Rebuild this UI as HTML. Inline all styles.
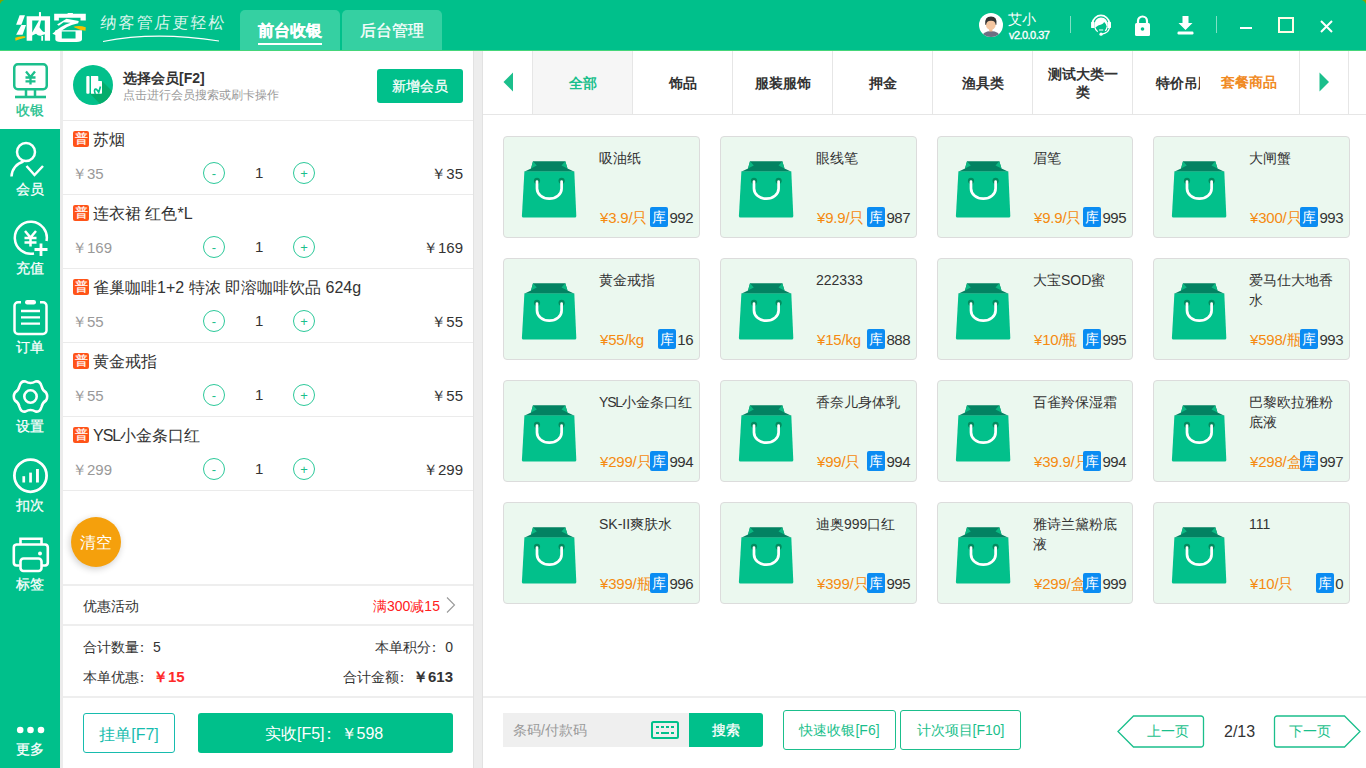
<!DOCTYPE html>
<html><head><meta charset="utf-8">
<style>
*{box-sizing:border-box;margin:0;padding:0}
html,body{width:1366px;height:768px;overflow:hidden;background:#fff;font-family:"Liberation Sans",sans-serif;color:#333}
.a{position:absolute;white-space:nowrap}
#hdr{position:absolute;left:0;top:0;width:1366px;height:50px;background:#00c08b}
#hline{position:absolute;left:0;top:50px;width:1366px;height:1px;background:#45d67a}
.tab{position:absolute;top:10px;width:100px;height:40px;background:#35d0a2;border-radius:5px 5px 0 0;color:#fff;font-size:16px;text-align:center;line-height:42px;-webkit-text-stroke:0.3px #fff}
#side{position:absolute;left:0;top:51px;width:60px;height:717px;background:#00c08b}
.si{position:absolute;left:0;width:60px;height:79px}
.si svg{position:absolute;left:0;top:0}
.si .t{position:absolute;left:0;width:60px;text-align:center;top:50px;font-size:14px;line-height:18px;color:#fff;-webkit-text-stroke:0.25px currentColor}
#gap1{position:absolute;left:60px;top:51px;width:3px;height:717px;background:#ececec}
#gap2{position:absolute;left:473px;top:51px;width:10px;height:717px;background:#ededed;border-left:1px solid #e2e2e2;border-right:1px solid #e2e2e2}
.hl{position:absolute;height:1px;background:#ebebeb}
.badge{position:absolute;width:16px;height:16px;background:#ff5419;border-radius:2px;color:#fff;font-size:13px;line-height:16px;text-align:center;-webkit-text-stroke:0.2px #fff}
.circ{position:absolute;width:22px;height:22px;border:1px solid #2cc99a;border-radius:50%;color:#1bbf8c;font-size:13px;line-height:22px;text-align:center}
.ctab{position:absolute;top:51px;width:100px;height:63px;border-left:1px solid #e6e6e6;font-size:14px;font-weight:bold;color:#333;text-align:center;display:flex;align-items:center;justify-content:center;line-height:18px}
.card{position:absolute;width:197px;height:102px;background:#ebf8ef;border:1px solid #dcdcdc;border-radius:4px}
.card svg{position:absolute;left:17px;top:23px}
.card .nm{position:absolute;left:95px;top:11px;width:97px;font-size:14px;line-height:20px;color:#333;white-space:normal;word-break:break-all}
.card .pr{position:absolute;left:96px;top:71px;font-size:15px;line-height:20px;color:#f58a10;white-space:nowrap;letter-spacing:-0.2px}
.card .stk{position:absolute;right:6px;top:71px;height:20px;font-size:15px;line-height:20px;color:#333;white-space:nowrap;letter-spacing:-0.5px}
.card .stk b{position:absolute;left:-19px;top:-1px;width:18px;height:20px;background:#0b8cf2;color:#fff;font-weight:normal;font-size:14px;line-height:20px;text-align:center;border-radius:2px;letter-spacing:0}
.cl{position:relative;left:-4px}
.obtn{position:absolute;border:1px solid #1bbf8c;border-radius:3px;color:#1bbf8c;font-size:14px;text-align:center}
</style></head><body>
<div id="hdr"></div>
<div id="hline"></div>
<svg class="a" style="left:0;top:0" width="5" height="5"><path d="M0 0 H4 Q1 1 0 4Z" fill="#7fa400"></path></svg>
<svg class="a" style="left:1361px;top:0" width="5" height="5"><path d="M5 0 H1 Q4 1 5 4Z" fill="#7fa400"></path></svg>

<!-- logo -->
<svg class="a" style="left:12px;top:8px" width="80" height="38" viewBox="0 0 1366 649">
<g fill="#fff">
<path d="M130 125 H222 L160 285 H70Z"></path>
<path d="M160 290 H240 L180 455 H70Z"></path>
<path d="M250 140 H650 V560 H560 V450 Q520 470 470 455 L530 480 V560 H500 V480 Q430 470 410 440 L345 470 V560 H250Z M345 215 V420 L460 215Z M495 215 L470 330 Q520 420 560 410 V215Z"></path>
<path d="M460 70 H495 V215 H460Z"></path>
<path d="M720 100 H950 V85 H1040 V100 H1260 V215 H1170 V165 H800 V215 H720Z"></path>
<path d="M770 280 L930 185 L1140 220 L1130 260 Q900 300 760 470 L690 440 Q830 300 1000 250 L880 245 L800 305Z"></path>
<path d="M740 380 H1195 V540 Q1195 580 1100 580 H830 Q740 580 740 540Z M850 400 V520 H1085 V400Z" fill-rule="evenodd"></path>
</g>
<path d="M55 510 Q140 470 230 485 L225 510 Q140 525 60 560Z" fill="#f8c000"></path>
<path d="M1050 320 Q1150 290 1260 330 L1255 390 Q1150 380 1070 335Z" fill="#f8c000"></path>
</svg>
<div class="a" style="left:101px;top:13px;font-size:16px;color:#fff;opacity:.85;line-height:20px;letter-spacing:2px;transform:skewX(-6deg)">纳客管店更轻松</div>
<svg class="a" style="left:100px;top:30px" width="130" height="14"><path d="M3 11.5 Q 55 1 119 11" stroke="#fff" stroke-width="1.2" fill="none"></path></svg>

<div class="tab" style="left:240px;font-weight:bold">前台收银</div>
<div class="a" style="left:258px;top:43px;width:64px;height:2px;background:#fff"></div>
<div class="tab" style="left:342px">后台管理</div>

<!-- user -->
<svg class="a" style="left:979px;top:13px" width="24" height="24" viewBox="0 0 24 24">
<circle cx="12" cy="12" r="12" fill="#fff"></circle>
<clipPath id="cc"><circle cx="12" cy="12" r="12"></circle></clipPath>
<g clip-path="url(#cc)"><path d="M2.5 25 Q3 18.3 12 18 Q21 18.3 21.5 25Z" fill="#6f6e82"/><rect x="10.2" y="15" width="3.2" height="3.5" fill="#efb88e"/><ellipse cx="11.8" cy="11.6" rx="4.9" ry="5.3" fill="#f5c6a0"/><path d="M6.2 11.8 Q5.3 3.6 12 3.6 Q18.6 3.6 17.4 11.8 L16.6 11.8 Q16.3 7.6 12 7.8 Q7.6 7.6 7.1 11.8Z" fill="#333"/></g>
</svg>
<div class="a" style="left:1008px;top:10px;font-size:14px;color:#fff;line-height:18px">艾小</div>
<div class="a" style="left:1009px;top:29px;font-size:11px;color:#fff;line-height:13px;letter-spacing:-0.55px;-webkit-text-stroke:0.35px #fff">v2.0.0.37</div>
<div class="a" style="left:1070px;top:16px;width:1px;height:17px;background:rgba(255,255,255,.5)"></div>
<svg class="a" style="left:1086px;top:10px" width="30" height="30" viewBox="0 0 768 768" fill="#fff" stroke="#fff">
<path d="M165 330 A220 225 0 0 1 600 330" fill="none" stroke-width="42"></path>
<rect x="130" y="300" width="88" height="162" rx="22" stroke="none"></rect>
<rect x="548" y="300" width="92" height="162" rx="22" stroke="none"></rect>
<path d="M215 430 Q210 200 380 195 Q560 195 558 420 L530 430 Q515 340 465 305 Q445 350 390 368 Q300 385 250 440Z" stroke="none"></path>
<path d="M225 430 Q240 520 300 555 M540 430 Q530 500 490 535" fill="none" stroke-width="32"></path>
<path d="M335 512 H440" stroke-width="26"></path>
<path d="M600 460 Q570 600 400 618" fill="none" stroke-width="32"></path>
<circle cx="385" cy="618" r="42" stroke="none"></circle>
</svg>
<svg class="a" style="left:1134px;top:15px" width="17" height="21" viewBox="0 0 17 21">
<path d="M4 9 V6 A4.5 4.5 0 0 1 13 6 V9" stroke="#fff" stroke-width="2.2" fill="none"></path><rect x="1" y="8" width="15" height="13" rx="1.5" fill="#fff"></rect><circle cx="8.5" cy="14" r="1.8" fill="#00c08b"></circle>
</svg>
<svg class="a" style="left:1177px;top:15px" width="17" height="20" viewBox="0 0 17 20">
<path d="M5.5 1 H11.5 V8 H15.5 L8.5 15 L1.5 8 H5.5Z" fill="#fff"></path><rect x="0.5" y="16.5" width="16" height="3" rx="1.2" fill="#fff"></rect>
</svg>
<div class="a" style="left:1216px;top:16px;width:1px;height:17px;background:rgba(255,255,255,.5)"></div>
<div class="a" style="left:1240px;top:27px;width:12px;height:2px;background:#fff"></div>
<div class="a" style="left:1278px;top:17px;width:16px;height:16px;border:2px solid #fdfde6"></div>
<svg class="a" style="left:1320px;top:20px" width="13" height="13" viewBox="0 0 13 13"><path d="M1 1 L12 12 M12 1 L1 12" stroke="#fff" stroke-width="2"></path></svg>

<!-- sidebar -->
<div id="side"></div>
<div class="si" style="top:51px;height:78px;background:#fff">
<svg width="60" height="79" viewBox="0 0 60 79" fill="none" stroke="#1bbf8c" stroke-width="2.5">
<rect x="14.25" y="13.25" width="32.5" height="25" rx="3.5"></rect>
<path d="M26 20.5 L30.5 26 L35 20.5 M30.5 26 V33.5 M25.5 26.5 H35.5 M25.5 30.3 H35.5" stroke-width="2.3"></path>
<path d="M26 39 V45 M35 39 V45"></path>
<path d="M15 46 H46" stroke-width="2.6"></path>
</svg>
<div class="t" style="color:#1bbf8c">收银</div>
</div>
<div class="si" style="top:130px">
<svg width="60" height="79" viewBox="0 0 60 79" fill="none" stroke="#fff" stroke-width="2.5">
<circle cx="26" cy="22" r="9"></circle>
<path d="M11.5 46.5 A16 16 0 0 1 23.5 31.5"></path>
<path d="M26.5 36 L34.5 45 L43 36"></path>
</svg>
<div class="t">会员</div>
</div>
<div class="si" style="top:209px">
<svg width="60" height="79" viewBox="0 0 60 79" fill="none" stroke="#fff" stroke-width="2.5">
<path d="M46.5 32 A16 16 0 1 0 34 44.5"></path>
<path d="M41 34.5 V47 M34.5 40.5 H47.5" stroke-width="2.8"></path>
<path d="M25 22 L30.5 28.5 L36 22 M30.5 28.5 V37.5 M24.5 29 H36.5 M24.5 33.5 H36.5" stroke-width="2.5"></path>
</svg>
<div class="t">充值</div>
</div>
<div class="si" style="top:288px">
<svg width="60" height="79" viewBox="0 0 60 79" fill="none" stroke="#fff" stroke-width="2.5">
<path d="M21 14.3 H18 A3.5 3.5 0 0 0 14.5 17.8 V42.5 A3.5 3.5 0 0 0 18 46 H43 A3.5 3.5 0 0 0 46.5 42.5 V17.8 A3.5 3.5 0 0 0 43 14.3 H40"></path>
<rect x="25" y="12" width="11" height="4.5" rx="2.2" fill="#fff" stroke="none"></rect>
<path d="M21 23 H40 M21 29.4 H40 M21 35.6 H40" stroke-width="2.4"></path>
</svg>
<div class="t">订单</div>
</div>
<div class="si" style="top:367px">
<svg width="60" height="79" viewBox="0 0 60 79" fill="none" stroke="#fff" stroke-width="2.6">
<path id="gear" d="M25.5 14.5 Q30.5 17.5 35.5 14.5 Q40 13.5 41.5 19 Q42.5 23.5 46 25.5 Q48.5 29.5 46 33.5 Q42.5 35.5 41.5 40 Q40 45.5 35.5 44.5 Q30.5 41.5 25.5 44.5 Q21 45.5 19.5 40 Q18.5 35.5 15 33.5 Q12.5 29.5 15 25.5 Q18.5 23.5 19.5 19 Q21 13.5 25.5 14.5Z"></path>
<circle cx="30.5" cy="29.5" r="6.2"></circle>
</svg>
<div class="t">设置</div>
</div>
<div class="si" style="top:446px">
<svg width="60" height="79" viewBox="0 0 60 79" fill="none" stroke="#fff" stroke-width="2.8">
<circle cx="30.5" cy="29.7" r="16.1"></circle>
<rect x="22.4" y="30.2" width="2.7" height="6.3" fill="#fff" stroke="none"></rect>
<rect x="29.2" y="26.6" width="2.7" height="9.9" fill="#fff" stroke="none"></rect>
<rect x="36" y="23" width="2.9" height="13.5" fill="#fff" stroke="none"></rect>
</svg>
<div class="t">扣次</div>
</div>
<div class="si" style="top:525px">
<svg width="60" height="79" viewBox="0 0 60 79" fill="none" stroke="#fff" stroke-width="2.6">
<path d="M20.5 19.5 V13.8 H41.5 V19.5"></path>
<path d="M19.5 40.5 H16.5 A3 3 0 0 1 13.8 37.5 V22.5 A3 3 0 0 1 16.5 19.5 H45 A3 3 0 0 1 47.8 22.5 V37.5 A3 3 0 0 1 45 40.5 H42"></path>
<rect x="20.5" y="33.5" width="21" height="12.5" rx="3"></rect>
<circle cx="40" cy="28.6" r="2" fill="#fff" stroke="none"></circle>
</svg>
<div class="t">标签</div>
</div>
<div class="si" style="top:689px">
<svg width="60" height="79" viewBox="0 0 60 79" fill="#fff">
<circle cx="20.2" cy="41" r="3.3"></circle><circle cx="30.5" cy="41" r="3.3"></circle><circle cx="41" cy="41" r="3.3"></circle>
</svg>
<div class="t" style="top:50.5px">更多</div>
</div>
<div id="gap1"></div>
<div id="gap2"></div>

<!-- left panel -->
<svg class="a" style="left:73px;top:65px" width="40" height="40" viewBox="0 0 40 40">
<defs><clipPath id="mc"><circle cx="20" cy="20" r="20"></circle></clipPath></defs>
<circle cx="20" cy="20" r="20" fill="#02c08b"></circle>
<g clip-path="url(#mc)"><path d="M29 16 L49 36 L37 48.8 L17 28.8Z" fill="#04ad6c"></path></g>
<rect x="13.3" y="11" width="3.2" height="17.8" rx="1" fill="#fff"></rect>
<path d="M18 11 H24.5 A0.8 0.8 0 0 1 25.3 11.8 V16 H28.2 A0.8 0.8 0 0 1 29 16.8 V28 A0.8 0.8 0 0 1 28.2 28.8 H18Z" fill="#fff"></path>
<path d="M22.3 29 C20.3 25 22.3 22.3 24.3 25.3 L25.7 27.3 L27.5 21.5" stroke="#02c08b" stroke-width="1.7" fill="none"></path>
</svg>
<div class="a" style="left:123px;top:69px;font-size:14px;font-weight:bold;line-height:18px;color:#333">选择会员[F2]</div>
<div class="a" style="left:123px;top:87px;font-size:12px;line-height:16px;color:#999">点击进行会员搜索或刷卡操作</div>
<div class="a" style="left:377px;top:69px;width:86px;height:34px;background:#00c08b;border-radius:3px;color:#fff;font-size:14px;line-height:34px;text-align:center;-webkit-text-stroke:0.25px #fff">新增会员</div>
<div class="hl" style="left:63px;top:120px;width:410px"></div>

<div class="badge" style="left:73px;top:131px">普</div><div class="a" style="left:93px;top:129px;font-size:16px;line-height:22px;color:#333">苏烟</div><div class="a" style="left:72px;top:164px;font-size:15px;line-height:20px;color:#999">￥35</div><div class="circ" style="left:203px;top:162px">-</div><div class="a" style="left:255px;top:163px;font-size:15px;line-height:20px;color:#333">1</div><div class="circ" style="left:293px;top:162px">+</div><div class="a" style="right:903px;top:164px;font-size:15px;line-height:20px;color:#333">￥35</div><div class="hl" style="left:63px;top:194px;width:410px"></div><div class="badge" style="left:73px;top:205px">普</div><div class="a" style="left:93px;top:203px;font-size:16px;line-height:22px;color:#333">连衣裙 红色*L</div><div class="a" style="left:72px;top:238px;font-size:15px;line-height:20px;color:#999">￥169</div><div class="circ" style="left:203px;top:236px">-</div><div class="a" style="left:255px;top:237px;font-size:15px;line-height:20px;color:#333">1</div><div class="circ" style="left:293px;top:236px">+</div><div class="a" style="right:903px;top:238px;font-size:15px;line-height:20px;color:#333">￥169</div><div class="hl" style="left:63px;top:268px;width:410px"></div><div class="badge" style="left:73px;top:279px">普</div><div class="a" style="left:93px;top:277px;font-size:16px;line-height:22px;color:#333">雀巢咖啡1+2 特浓 即溶咖啡饮品 624g</div><div class="a" style="left:72px;top:312px;font-size:15px;line-height:20px;color:#999">￥55</div><div class="circ" style="left:203px;top:310px">-</div><div class="a" style="left:255px;top:311px;font-size:15px;line-height:20px;color:#333">1</div><div class="circ" style="left:293px;top:310px">+</div><div class="a" style="right:903px;top:312px;font-size:15px;line-height:20px;color:#333">￥55</div><div class="hl" style="left:63px;top:342px;width:410px"></div><div class="badge" style="left:73px;top:353px">普</div><div class="a" style="left:93px;top:351px;font-size:16px;line-height:22px;color:#333">黄金戒指</div><div class="a" style="left:72px;top:386px;font-size:15px;line-height:20px;color:#999">￥55</div><div class="circ" style="left:203px;top:384px">-</div><div class="a" style="left:255px;top:385px;font-size:15px;line-height:20px;color:#333">1</div><div class="circ" style="left:293px;top:384px">+</div><div class="a" style="right:903px;top:386px;font-size:15px;line-height:20px;color:#333">￥55</div><div class="hl" style="left:63px;top:416px;width:410px"></div><div class="badge" style="left:73px;top:427px">普</div><div class="a" style="left:93px;top:425px;font-size:16px;line-height:22px;color:#333"><span style="letter-spacing:-1px">YSL</span>小金条口红</div><div class="a" style="left:72px;top:460px;font-size:15px;line-height:20px;color:#999">￥299</div><div class="circ" style="left:203px;top:458px">-</div><div class="a" style="left:255px;top:459px;font-size:15px;line-height:20px;color:#333">1</div><div class="circ" style="left:293px;top:458px">+</div><div class="a" style="right:903px;top:460px;font-size:15px;line-height:20px;color:#333">￥299</div><div class="hl" style="left:63px;top:490px;width:410px"></div>

<!-- clear -->
<div class="a" style="left:71px;top:517px;width:50px;height:50px;border-radius:50%;background:#f5a00c;box-shadow:-1px 2px 7px rgba(0,0,0,.2);color:#fff;font-size:16px;line-height:52px;text-align:center">清空</div>
<div class="a" style="left:63px;top:584px;width:410px;height:2px;background:#eeeeee"></div>
<div class="a" style="left:83px;top:597px;font-size:14px;line-height:18px;color:#333">优惠活动</div>
<div class="a" style="left:373px;top:597px;font-size:14px;line-height:18px;color:#ff2020">满300减15</div>
<svg class="a" style="left:445px;top:596px" width="12" height="18" viewBox="0 0 12 18"><path d="M2 1.5 L9.5 9 L2 16.5" stroke="#999" stroke-width="1.1" fill="none"></path></svg>
<div class="a" style="left:63px;top:624px;width:410px;height:2px;background:#eeeeee"></div>
<div class="a" style="left:83px;top:638px;font-size:14px;line-height:18px;color:#333">合计数量<span class="cl">：</span>5</div>
<div class="a" style="right:913px;top:638px;font-size:14px;line-height:18px;color:#333">本单积分<span class="cl">：</span>0</div>
<div class="a" style="left:83px;top:668px;font-size:14px;line-height:18px;color:#333">本单优惠<span class="cl">：</span><span style="color:#ff2a2a;font-weight:bold;font-size:15px">￥15</span></div>
<div class="a" style="right:913px;top:668px;font-size:14px;line-height:18px;color:#333">合计金额<span class="cl">：</span><span style="font-weight:bold;font-size:15px">￥613</span></div>
<div class="a" style="left:63px;top:696px;width:410px;height:2px;background:#eeeeee"></div>
<div class="a" style="left:83px;top:713px;width:92px;height:40px;border:1px solid #17bcae;border-radius:3px;color:#17bcae;font-size:16px;line-height:41px;text-align:center">挂单[F7]</div>
<div class="a" style="left:198px;top:713px;width:255px;height:40px;background:#00c08b;border-radius:3px;color:#fff;font-size:16px;line-height:42px;padding-left:67px">实收[F5]<span class="cl">：</span>￥598</div>

<!-- right panel -->
<div class="a" style="left:483px;top:114px;width:883px;height:1px;background:#e6e6e6"></div>
<svg class="a" style="left:503px;top:72px" width="11" height="20" viewBox="0 0 11 20"><path d="M10 0.5 V19.5 L0.5 10Z" fill="#1bbf8c"></path></svg>
<div class="ctab" style="left:532px;background:#f6f6f6;color:#1bbf8c">全部</div>
<div class="ctab" style="left:632px">饰品</div>
<div class="ctab" style="left:732px">服装服饰</div>
<div class="ctab" style="left:832px">押金</div>
<div class="ctab" style="left:932px">渔具类</div>
<div class="ctab" style="left:1032px;padding:0 14px">测试大类一类</div>
<div class="ctab" style="left:1132px;width:68px;justify-content:flex-start;padding-left:23px;overflow:hidden;white-space:nowrap;border-left:1px solid #e6e6e6">特价吊牌</div>
<div class="a" style="left:1221px;top:73px;font-size:14px;font-weight:bold;line-height:18px;color:#f08a24">套餐商品</div>
<div class="a" style="left:1299px;top:51px;width:1px;height:63px;background:#e6e6e6"></div>
<svg class="a" style="left:1319px;top:72px" width="11" height="20" viewBox="0 0 11 20"><path d="M0.5 0.5 V19.5 L10 10Z" fill="#1bbf8c"></path></svg>
<div class="a" style="left:1348px;top:51px;width:1px;height:63px;background:#e6e6e6"></div>

<div class="card" style="left:503px;top:136px;width:197px"><svg width="58" height="60" viewBox="0 0 58 60"><path d="M12 1.2 H44.3 L46.5 8.5 L53.5 11.8 H3.2 L10 8.5Z" fill="#038262"></path><path d="M12 1.2 L15.8 5.6 L10 8.6Z M44.3 1.2 L40.5 5.6 L46.5 8.6Z" fill="#0bb882"></path><path d="M3.4 11.5 H53.3 L55.3 56 Q55.3 57.5 53.8 57.5 H2.4 Q0.9 57.5 0.9 56Z" fill="#02c08b"></path><circle cx="16" cy="20.8" r="3.1" fill="#038a5f"></circle><circle cx="40.6" cy="20.8" r="3.1" fill="#038a5f"></circle><path d="M16 21.5 V28.5 A12.3 10.2 0 0 0 40.6 28.5 V21.5" stroke="#fff" stroke-width="2.7" fill="none" stroke-linecap="round"></path></svg><div class="nm">吸油纸</div><div class="pr">¥3.9/只</div><div class="stk"><b>库</b>992</div></div><div class="card" style="left:720px;top:136px;width:197px"><svg width="58" height="60" viewBox="0 0 58 60"><path d="M12 1.2 H44.3 L46.5 8.5 L53.5 11.8 H3.2 L10 8.5Z" fill="#038262"></path><path d="M12 1.2 L15.8 5.6 L10 8.6Z M44.3 1.2 L40.5 5.6 L46.5 8.6Z" fill="#0bb882"></path><path d="M3.4 11.5 H53.3 L55.3 56 Q55.3 57.5 53.8 57.5 H2.4 Q0.9 57.5 0.9 56Z" fill="#02c08b"></path><circle cx="16" cy="20.8" r="3.1" fill="#038a5f"></circle><circle cx="40.6" cy="20.8" r="3.1" fill="#038a5f"></circle><path d="M16 21.5 V28.5 A12.3 10.2 0 0 0 40.6 28.5 V21.5" stroke="#fff" stroke-width="2.7" fill="none" stroke-linecap="round"></path></svg><div class="nm">眼线笔</div><div class="pr">¥9.9/只</div><div class="stk"><b>库</b>987</div></div><div class="card" style="left:937px;top:136px;width:196px"><svg width="58" height="60" viewBox="0 0 58 60"><path d="M12 1.2 H44.3 L46.5 8.5 L53.5 11.8 H3.2 L10 8.5Z" fill="#038262"></path><path d="M12 1.2 L15.8 5.6 L10 8.6Z M44.3 1.2 L40.5 5.6 L46.5 8.6Z" fill="#0bb882"></path><path d="M3.4 11.5 H53.3 L55.3 56 Q55.3 57.5 53.8 57.5 H2.4 Q0.9 57.5 0.9 56Z" fill="#02c08b"></path><circle cx="16" cy="20.8" r="3.1" fill="#038a5f"></circle><circle cx="40.6" cy="20.8" r="3.1" fill="#038a5f"></circle><path d="M16 21.5 V28.5 A12.3 10.2 0 0 0 40.6 28.5 V21.5" stroke="#fff" stroke-width="2.7" fill="none" stroke-linecap="round"></path></svg><div class="nm">眉笔</div><div class="pr">¥9.9/只</div><div class="stk"><b>库</b>995</div></div><div class="card" style="left:1153px;top:136px;width:197px"><svg width="58" height="60" viewBox="0 0 58 60"><path d="M12 1.2 H44.3 L46.5 8.5 L53.5 11.8 H3.2 L10 8.5Z" fill="#038262"></path><path d="M12 1.2 L15.8 5.6 L10 8.6Z M44.3 1.2 L40.5 5.6 L46.5 8.6Z" fill="#0bb882"></path><path d="M3.4 11.5 H53.3 L55.3 56 Q55.3 57.5 53.8 57.5 H2.4 Q0.9 57.5 0.9 56Z" fill="#02c08b"></path><circle cx="16" cy="20.8" r="3.1" fill="#038a5f"></circle><circle cx="40.6" cy="20.8" r="3.1" fill="#038a5f"></circle><path d="M16 21.5 V28.5 A12.3 10.2 0 0 0 40.6 28.5 V21.5" stroke="#fff" stroke-width="2.7" fill="none" stroke-linecap="round"></path></svg><div class="nm">大闸蟹</div><div class="pr">¥300/只</div><div class="stk"><b>库</b>993</div></div><div class="card" style="left:503px;top:258px;width:197px"><svg width="58" height="60" viewBox="0 0 58 60"><path d="M12 1.2 H44.3 L46.5 8.5 L53.5 11.8 H3.2 L10 8.5Z" fill="#038262"></path><path d="M12 1.2 L15.8 5.6 L10 8.6Z M44.3 1.2 L40.5 5.6 L46.5 8.6Z" fill="#0bb882"></path><path d="M3.4 11.5 H53.3 L55.3 56 Q55.3 57.5 53.8 57.5 H2.4 Q0.9 57.5 0.9 56Z" fill="#02c08b"></path><circle cx="16" cy="20.8" r="3.1" fill="#038a5f"></circle><circle cx="40.6" cy="20.8" r="3.1" fill="#038a5f"></circle><path d="M16 21.5 V28.5 A12.3 10.2 0 0 0 40.6 28.5 V21.5" stroke="#fff" stroke-width="2.7" fill="none" stroke-linecap="round"></path></svg><div class="nm">黄金戒指</div><div class="pr">¥55/kg</div><div class="stk"><b>库</b>16</div></div><div class="card" style="left:720px;top:258px;width:197px"><svg width="58" height="60" viewBox="0 0 58 60"><path d="M12 1.2 H44.3 L46.5 8.5 L53.5 11.8 H3.2 L10 8.5Z" fill="#038262"></path><path d="M12 1.2 L15.8 5.6 L10 8.6Z M44.3 1.2 L40.5 5.6 L46.5 8.6Z" fill="#0bb882"></path><path d="M3.4 11.5 H53.3 L55.3 56 Q55.3 57.5 53.8 57.5 H2.4 Q0.9 57.5 0.9 56Z" fill="#02c08b"></path><circle cx="16" cy="20.8" r="3.1" fill="#038a5f"></circle><circle cx="40.6" cy="20.8" r="3.1" fill="#038a5f"></circle><path d="M16 21.5 V28.5 A12.3 10.2 0 0 0 40.6 28.5 V21.5" stroke="#fff" stroke-width="2.7" fill="none" stroke-linecap="round"></path></svg><div class="nm">222333</div><div class="pr">¥15/kg</div><div class="stk"><b>库</b>888</div></div><div class="card" style="left:937px;top:258px;width:196px"><svg width="58" height="60" viewBox="0 0 58 60"><path d="M12 1.2 H44.3 L46.5 8.5 L53.5 11.8 H3.2 L10 8.5Z" fill="#038262"></path><path d="M12 1.2 L15.8 5.6 L10 8.6Z M44.3 1.2 L40.5 5.6 L46.5 8.6Z" fill="#0bb882"></path><path d="M3.4 11.5 H53.3 L55.3 56 Q55.3 57.5 53.8 57.5 H2.4 Q0.9 57.5 0.9 56Z" fill="#02c08b"></path><circle cx="16" cy="20.8" r="3.1" fill="#038a5f"></circle><circle cx="40.6" cy="20.8" r="3.1" fill="#038a5f"></circle><path d="M16 21.5 V28.5 A12.3 10.2 0 0 0 40.6 28.5 V21.5" stroke="#fff" stroke-width="2.7" fill="none" stroke-linecap="round"></path></svg><div class="nm">大宝SOD蜜</div><div class="pr">¥10/瓶</div><div class="stk"><b>库</b>995</div></div><div class="card" style="left:1153px;top:258px;width:197px"><svg width="58" height="60" viewBox="0 0 58 60"><path d="M12 1.2 H44.3 L46.5 8.5 L53.5 11.8 H3.2 L10 8.5Z" fill="#038262"></path><path d="M12 1.2 L15.8 5.6 L10 8.6Z M44.3 1.2 L40.5 5.6 L46.5 8.6Z" fill="#0bb882"></path><path d="M3.4 11.5 H53.3 L55.3 56 Q55.3 57.5 53.8 57.5 H2.4 Q0.9 57.5 0.9 56Z" fill="#02c08b"></path><circle cx="16" cy="20.8" r="3.1" fill="#038a5f"></circle><circle cx="40.6" cy="20.8" r="3.1" fill="#038a5f"></circle><path d="M16 21.5 V28.5 A12.3 10.2 0 0 0 40.6 28.5 V21.5" stroke="#fff" stroke-width="2.7" fill="none" stroke-linecap="round"></path></svg><div class="nm">爱马仕大地香水</div><div class="pr">¥598/瓶</div><div class="stk"><b>库</b>993</div></div><div class="card" style="left:503px;top:380px;width:197px"><svg width="58" height="60" viewBox="0 0 58 60"><path d="M12 1.2 H44.3 L46.5 8.5 L53.5 11.8 H3.2 L10 8.5Z" fill="#038262"></path><path d="M12 1.2 L15.8 5.6 L10 8.6Z M44.3 1.2 L40.5 5.6 L46.5 8.6Z" fill="#0bb882"></path><path d="M3.4 11.5 H53.3 L55.3 56 Q55.3 57.5 53.8 57.5 H2.4 Q0.9 57.5 0.9 56Z" fill="#02c08b"></path><circle cx="16" cy="20.8" r="3.1" fill="#038a5f"></circle><circle cx="40.6" cy="20.8" r="3.1" fill="#038a5f"></circle><path d="M16 21.5 V28.5 A12.3 10.2 0 0 0 40.6 28.5 V21.5" stroke="#fff" stroke-width="2.7" fill="none" stroke-linecap="round"></path></svg><div class="nm"><span style="letter-spacing:-1.2px">YSL</span>小金条口红</div><div class="pr">¥299/只</div><div class="stk"><b>库</b>994</div></div><div class="card" style="left:720px;top:380px;width:197px"><svg width="58" height="60" viewBox="0 0 58 60"><path d="M12 1.2 H44.3 L46.5 8.5 L53.5 11.8 H3.2 L10 8.5Z" fill="#038262"></path><path d="M12 1.2 L15.8 5.6 L10 8.6Z M44.3 1.2 L40.5 5.6 L46.5 8.6Z" fill="#0bb882"></path><path d="M3.4 11.5 H53.3 L55.3 56 Q55.3 57.5 53.8 57.5 H2.4 Q0.9 57.5 0.9 56Z" fill="#02c08b"></path><circle cx="16" cy="20.8" r="3.1" fill="#038a5f"></circle><circle cx="40.6" cy="20.8" r="3.1" fill="#038a5f"></circle><path d="M16 21.5 V28.5 A12.3 10.2 0 0 0 40.6 28.5 V21.5" stroke="#fff" stroke-width="2.7" fill="none" stroke-linecap="round"></path></svg><div class="nm">香奈儿身体乳</div><div class="pr">¥99/只</div><div class="stk"><b>库</b>994</div></div><div class="card" style="left:937px;top:380px;width:196px"><svg width="58" height="60" viewBox="0 0 58 60"><path d="M12 1.2 H44.3 L46.5 8.5 L53.5 11.8 H3.2 L10 8.5Z" fill="#038262"></path><path d="M12 1.2 L15.8 5.6 L10 8.6Z M44.3 1.2 L40.5 5.6 L46.5 8.6Z" fill="#0bb882"></path><path d="M3.4 11.5 H53.3 L55.3 56 Q55.3 57.5 53.8 57.5 H2.4 Q0.9 57.5 0.9 56Z" fill="#02c08b"></path><circle cx="16" cy="20.8" r="3.1" fill="#038a5f"></circle><circle cx="40.6" cy="20.8" r="3.1" fill="#038a5f"></circle><path d="M16 21.5 V28.5 A12.3 10.2 0 0 0 40.6 28.5 V21.5" stroke="#fff" stroke-width="2.7" fill="none" stroke-linecap="round"></path></svg><div class="nm">百雀羚保湿霜</div><div class="pr">¥39.9/只</div><div class="stk"><b>库</b>994</div></div><div class="card" style="left:1153px;top:380px;width:197px"><svg width="58" height="60" viewBox="0 0 58 60"><path d="M12 1.2 H44.3 L46.5 8.5 L53.5 11.8 H3.2 L10 8.5Z" fill="#038262"></path><path d="M12 1.2 L15.8 5.6 L10 8.6Z M44.3 1.2 L40.5 5.6 L46.5 8.6Z" fill="#0bb882"></path><path d="M3.4 11.5 H53.3 L55.3 56 Q55.3 57.5 53.8 57.5 H2.4 Q0.9 57.5 0.9 56Z" fill="#02c08b"></path><circle cx="16" cy="20.8" r="3.1" fill="#038a5f"></circle><circle cx="40.6" cy="20.8" r="3.1" fill="#038a5f"></circle><path d="M16 21.5 V28.5 A12.3 10.2 0 0 0 40.6 28.5 V21.5" stroke="#fff" stroke-width="2.7" fill="none" stroke-linecap="round"></path></svg><div class="nm">巴黎欧拉雅粉底液</div><div class="pr">¥298/盒</div><div class="stk"><b>库</b>997</div></div><div class="card" style="left:503px;top:502px;width:197px"><svg width="58" height="60" viewBox="0 0 58 60"><path d="M12 1.2 H44.3 L46.5 8.5 L53.5 11.8 H3.2 L10 8.5Z" fill="#038262"></path><path d="M12 1.2 L15.8 5.6 L10 8.6Z M44.3 1.2 L40.5 5.6 L46.5 8.6Z" fill="#0bb882"></path><path d="M3.4 11.5 H53.3 L55.3 56 Q55.3 57.5 53.8 57.5 H2.4 Q0.9 57.5 0.9 56Z" fill="#02c08b"></path><circle cx="16" cy="20.8" r="3.1" fill="#038a5f"></circle><circle cx="40.6" cy="20.8" r="3.1" fill="#038a5f"></circle><path d="M16 21.5 V28.5 A12.3 10.2 0 0 0 40.6 28.5 V21.5" stroke="#fff" stroke-width="2.7" fill="none" stroke-linecap="round"></path></svg><div class="nm">SK-II爽肤水</div><div class="pr">¥399/瓶</div><div class="stk"><b>库</b>996</div></div><div class="card" style="left:720px;top:502px;width:197px"><svg width="58" height="60" viewBox="0 0 58 60"><path d="M12 1.2 H44.3 L46.5 8.5 L53.5 11.8 H3.2 L10 8.5Z" fill="#038262"></path><path d="M12 1.2 L15.8 5.6 L10 8.6Z M44.3 1.2 L40.5 5.6 L46.5 8.6Z" fill="#0bb882"></path><path d="M3.4 11.5 H53.3 L55.3 56 Q55.3 57.5 53.8 57.5 H2.4 Q0.9 57.5 0.9 56Z" fill="#02c08b"></path><circle cx="16" cy="20.8" r="3.1" fill="#038a5f"></circle><circle cx="40.6" cy="20.8" r="3.1" fill="#038a5f"></circle><path d="M16 21.5 V28.5 A12.3 10.2 0 0 0 40.6 28.5 V21.5" stroke="#fff" stroke-width="2.7" fill="none" stroke-linecap="round"></path></svg><div class="nm">迪奥999口红</div><div class="pr">¥399/只</div><div class="stk"><b>库</b>995</div></div><div class="card" style="left:937px;top:502px;width:196px"><svg width="58" height="60" viewBox="0 0 58 60"><path d="M12 1.2 H44.3 L46.5 8.5 L53.5 11.8 H3.2 L10 8.5Z" fill="#038262"></path><path d="M12 1.2 L15.8 5.6 L10 8.6Z M44.3 1.2 L40.5 5.6 L46.5 8.6Z" fill="#0bb882"></path><path d="M3.4 11.5 H53.3 L55.3 56 Q55.3 57.5 53.8 57.5 H2.4 Q0.9 57.5 0.9 56Z" fill="#02c08b"></path><circle cx="16" cy="20.8" r="3.1" fill="#038a5f"></circle><circle cx="40.6" cy="20.8" r="3.1" fill="#038a5f"></circle><path d="M16 21.5 V28.5 A12.3 10.2 0 0 0 40.6 28.5 V21.5" stroke="#fff" stroke-width="2.7" fill="none" stroke-linecap="round"></path></svg><div class="nm">雅诗兰黛粉底液</div><div class="pr">¥299/盒</div><div class="stk"><b>库</b>999</div></div><div class="card" style="left:1153px;top:502px;width:197px"><svg width="58" height="60" viewBox="0 0 58 60"><path d="M12 1.2 H44.3 L46.5 8.5 L53.5 11.8 H3.2 L10 8.5Z" fill="#038262"></path><path d="M12 1.2 L15.8 5.6 L10 8.6Z M44.3 1.2 L40.5 5.6 L46.5 8.6Z" fill="#0bb882"></path><path d="M3.4 11.5 H53.3 L55.3 56 Q55.3 57.5 53.8 57.5 H2.4 Q0.9 57.5 0.9 56Z" fill="#02c08b"></path><circle cx="16" cy="20.8" r="3.1" fill="#038a5f"></circle><circle cx="40.6" cy="20.8" r="3.1" fill="#038a5f"></circle><path d="M16 21.5 V28.5 A12.3 10.2 0 0 0 40.6 28.5 V21.5" stroke="#fff" stroke-width="2.7" fill="none" stroke-linecap="round"></path></svg><div class="nm">111</div><div class="pr">¥10/只</div><div class="stk"><b>库</b>0</div></div>

<div class="a" style="left:483px;top:696px;width:883px;height:2px;background:#eeeeee"></div>
<div class="a" style="left:503px;top:713px;width:186px;height:34px;background:#efefef"></div>
<div class="a" style="left:513px;top:721px;font-size:14px;line-height:18px;color:#999">条码/付款码</div>
<svg class="a" style="left:651px;top:721px" width="29" height="19" viewBox="0 0 29 19" fill="none">
<rect x="1" y="1" width="26" height="16" rx="1.5" stroke="#02c08b" stroke-width="2"></rect>
<path d="M5 6 H8 M10 6 H13 M15 6 H18 M20 6 H23 M5 12 H8 M10 12 H18 M20 12 H23" stroke="#02c08b" stroke-width="2"></path>
</svg>
<div class="a" style="left:689px;top:713px;width:74px;height:34px;background:#00c08b;border-radius:0 3px 3px 0;color:#fff;font-size:14px;line-height:34px;text-align:center;-webkit-text-stroke:0.3px #fff">搜索</div>
<div class="obtn" style="left:783px;top:710px;width:113px;height:40px;line-height:38px">快速收银[F6]</div>
<div class="obtn" style="left:900px;top:710px;width:121px;height:40px;line-height:38px">计次项目[F10]</div>
<svg class="a" style="left:1117px;top:714.5px" width="88" height="33" viewBox="0 0 88 33"><path d="M1 16.5 L16.5 1 H84 A2.5 2.5 0 0 1 86.5 3.5 V29.5 A2.5 2.5 0 0 1 84 32 H16.5Z" fill="none" stroke="#1bbf8c" stroke-width="1.3"></path></svg>
<div class="a" style="left:1147px;top:722px;font-size:14px;line-height:18px;color:#1bbf8c">上一页</div>
<div class="a" style="left:1224px;top:723px;font-size:16px;line-height:18px;color:#333">2/13</div>
<svg class="a" style="left:1273px;top:714.5px" width="88" height="33" viewBox="0 0 88 33"><path d="M87 16.5 L71.5 1 H4 A2.5 2.5 0 0 0 1.5 3.5 V29.5 A2.5 2.5 0 0 0 4 32 H71.5Z" fill="none" stroke="#1bbf8c" stroke-width="1.3"></path></svg>
<div class="a" style="left:1289px;top:722px;font-size:14px;line-height:18px;color:#1bbf8c">下一页</div>



</body></html>
